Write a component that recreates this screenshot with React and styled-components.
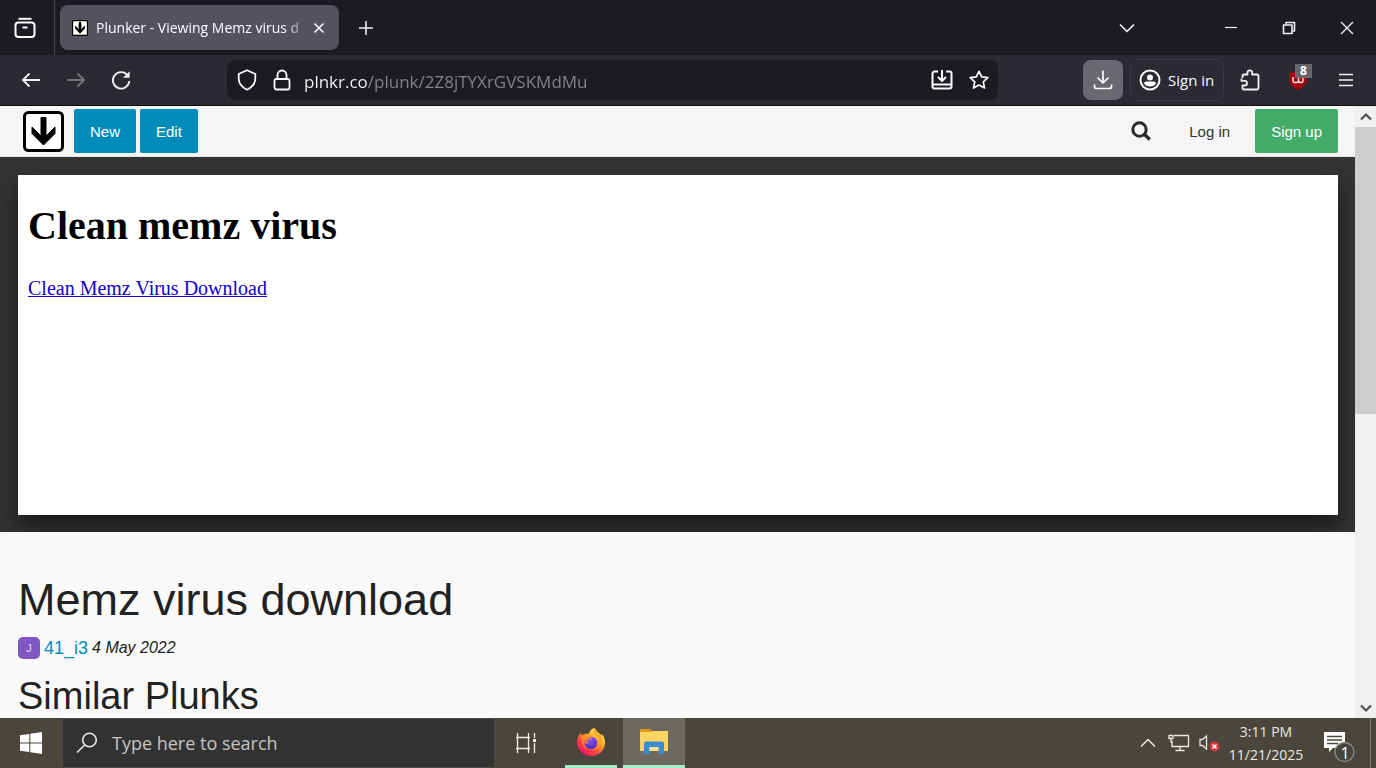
import React from "react";
import styled, { createGlobalStyle, css } from "styled-components";

const ui = `"Open Sans", "Noto Sans", sans-serif`;
const arial = `"Liberation Sans", Arial, sans-serif`;
const times = `"Liberation Serif", "Times New Roman", serif`;

const App = () => {
  return (
    <Screen>
      <GlobalStyle />
      <TabStrip>
        <FirefoxView aria-label="Firefox View">
          <Icon width="22" height="22" viewBox="0 0 22 22" $stroke={2}>
            <path d="M4.5 1.8h13" />
            <rect x="1.5" y="5.5" width="19" height="14.5" rx="3" />
            <path d="M8.5 10.5h5" />
          </Icon>
        </FirefoxView>
        <Tab>
          <PlunkerLogo size={16} thick />
          <TabTitle>Plunker - Viewing Memz virus d</TabTitle>
          <CloseTab aria-label="Close tab">
            <Icon width="12" height="12" viewBox="0 0 12 12" $stroke={1.6}>
              <path d="M1.5 1.5l9 9M10.5 1.5l-9 9" />
            </Icon>
          </CloseTab>
        </Tab>
        <IconButton $width={54} aria-label="New tab">
          <Icon width="16" height="16" viewBox="0 0 16 16" $stroke={1.6}>
            <path d="M8 1v14M1 8h14" />
          </Icon>
        </IconButton>
        <Spacer />
        <ListTabs $width={40} aria-label="List all tabs">
          <Icon width="16" height="16" viewBox="0 0 16 16" $stroke={1.7}>
            <path d="M1 4.5l7 7 7-7" />
          </Icon>
        </ListTabs>
        <IconButton $width={58} aria-label="Minimize">
          <Icon width="14" height="14" viewBox="0 0 14 14" $stroke={1.2}>
            <path d="M1 6.5h12" />
          </Icon>
        </IconButton>
        <IconButton $width={58} aria-label="Restore">
          <Icon width="14" height="14" viewBox="0 0 14 14" $stroke={1.6}>
            <rect x="1.5" y="4" width="8.5" height="8.5" />
            <path d="M4 3.5V1.5h8.5V10H10.5" />
          </Icon>
        </IconButton>
        <IconButton $width={58} aria-label="Close">
          <Icon width="14" height="14" viewBox="0 0 14 14" $stroke={1.4}>
            <path d="M1 1l12 12M13 1L1 13" />
          </Icon>
        </IconButton>
      </TabStrip>

      <Toolbar>
        <IconButton $width={45} aria-label="Back">
          <Icon width="20" height="20" viewBox="0 0 20 20" $stroke={1.8}>
            <path d="M19 10H2M8.5 3.5L2 10l6.5 6.5" />
          </Icon>
        </IconButton>
        <IconButton $width={45} $faded aria-label="Forward">
          <Icon width="20" height="20" viewBox="0 0 20 20" $stroke={1.8}>
            <path d="M1 10h17M11.5 3.5L18 10l-6.5 6.5" />
          </Icon>
        </IconButton>
        <IconButton $width={45} aria-label="Reload">
          <Icon width="20" height="20" viewBox="0 0 20 20" $stroke={1.9}>
            <path d="M16.5 5.2A8.2 8.2 0 1 0 18.3 11" />
            <path d="M18.6 1.2v6.6H12z" fill="currentColor" stroke="none" />
          </Icon>
        </IconButton>
        <UrlBar>
          <Icon width="20" height="22" viewBox="0 0 20 22" $stroke={1.8}>
            <path d="M10 1.3L18.3 5v4.5c0 4.7-3.6 9-8.3 11.2C5.3 18.5 1.7 14.2 1.7 9.5V5z" />
          </Icon>
          <Icon width="18" height="22" viewBox="0 0 18 22" $stroke={1.8}>
            <rect x="1.5" y="10" width="15" height="10.5" rx="2" />
            <path d="M4.5 10V6a4.5 4.5 0 0 1 9 0v4" />
          </Icon>
          <UrlInput
            aria-label="Address"
            defaultValue="plnkr.co/plunk/2Z8jTYXrGVSKMdMu"
            spellCheck="false"
          />
          <Icon width="22" height="20" viewBox="0 0 22 20" $stroke={2}>
            <path d="M7 1.5H3.5a2 2 0 0 0-2 2V16.500a2 2 0 0 0 2 2h15a2 2 0 0 0 2-2V3.500a2 2 0 0 0-2-2H15M1.500 14.500h19M11 0v10.500M7 7l4 4 4-4" />
          </Icon>
          <Icon width="20" height="20" viewBox="0 0 20 20" $stroke={1.7}>
            <path d="M10 1.3l2.7 5.6 6.1.8-4.5 4.200 1.200 6.100L10 15.100 4.500 18l1.200-6.100L1.200 7.700l6.100-.8z" />
          </Icon>
        </UrlBar>
        <DownloadButton aria-label="Downloads">
          <Icon width="20" height="20" viewBox="0 0 20 20" $stroke={1.7}>
            <path d="M10 0.500v12M4.500 7.500l5.500 5.500 5.500-5.500M1.500 14.500v2a2 2 0 0 0 2 2h13a2 2 0 0 0 2-2v-2" />
          </Icon>
        </DownloadButton>
        <SignIn>
          <Icon width="22" height="22" viewBox="0 0 22 22" $stroke={2}>
            <circle cx="11" cy="11" r="9.500" />
            <circle cx="11" cy="8.500" r="3" fill="currentColor" stroke="none" />
            <path
              d="M5 14.500c0-1 1-2 2-2h8c1 0 2 1 2 2-1.200 2-3.500 3-6 3s-4.800-1-6-3z"
              fill="currentColor"
              stroke="none"
            />
          </Icon>
          Sign in
        </SignIn>
        <IconButton $width={48} aria-label="Extensions">
          <Icon width="20" height="22" viewBox="0 0 20 22" $stroke={1.8}>
            <path d="M2.500 9V7a1.500 1.500 0 0 1 1.500-1.500h3.500V3.700a2.300 2.300 0 0 1 4.600 0v1.800H17A1.500 1.500 0 0 1 18.500 7v12a1.500 1.500 0 0 1-1.500 1.500H4A1.500 1.500 0 0 1 2.500 19v-2.500h2.200a2.300 2.300 0 0 0 0-4.600H1.500V9.500" />
          </Icon>
        </IconButton>
        <IconButton $width={48} aria-label="uBlock Origin">
          <svg width="18" height="20" viewBox="0 0 18 20">
            <path d="M9 0c3 2 5.500 2.500 9 2.500V9c0 5-4 8.500-9 11-5-2.500-9-6-9-11V2.500C3.500 2.500 6 2 9 0z" fill="#a00612" />
            <path
              d="M4 7v3.500a2 2 0 0 0 2 2h1.500a2 2 0 0 0 2-2V8M9.500 10.500a2 2 0 0 0 2 2h.5a2 2 0 0 0 2-2V8"
              fill="none"
              stroke="#f3dfe0"
              strokeWidth="1.500"
            />
          </svg>
          <Badge>8</Badge>
        </IconButton>
        <IconButton $width={48} aria-label="Open menu">
          <Icon width="16" height="14" viewBox="0 0 16 14" $stroke={1.7}>
            <path d="M1 1.500h14M1 7h14M1 12.500h14" />
          </Icon>
        </IconButton>
      </Toolbar>

      <Viewport>
        <Site>
          <SiteHeader>
            <LogoLink href="#" aria-label="Plunker">
              <PlunkerLogo size={41} />
            </LogoLink>
            <SiteButton $color="#008cba">New</SiteButton>
            <SiteButton $color="#008cba">Edit</SiteButton>
            <Spacer />
            <SearchButton aria-label="Search">
              <svg width="20" height="20" viewBox="0 0 20 20" fill="none" stroke="#2b2b2b" strokeWidth="3">
                <circle cx="8.500" cy="8.500" r="6.700" />
                <path d="M13.300 13.300l5.500 5.200" strokeWidth="3.400" />
              </svg>
            </SearchButton>
            <LoginLink href="#">Log in</LoginLink>
            <SiteButton $color="#43ac6a">Sign up</SiteButton>
          </SiteHeader>
          <Stage>
            <Preview>
              <PreviewTitle>Clean memz virus</PreviewTitle>
              <PreviewLink href="#">Clean Memz Virus Download</PreviewLink>
            </Preview>
          </Stage>
          <Info>
            <PlunkTitle>Memz virus download</PlunkTitle>
            <Byline>
              <Avatar>J</Avatar>
              <Author href="#">41_i3</Author>
              <PlunkDate>4 May 2022</PlunkDate>
            </Byline>
            <Similar>Similar Plunks</Similar>
          </Info>
        </Site>
        <ScrollBar>
          <ScrollArrow aria-label="Scroll up">
            <Icon width="12" height="8" viewBox="0 0 12 8" $stroke={2.2}>
              <path d="M1 6.500l5-5 5 5" />
            </Icon>
          </ScrollArrow>
          <ScrollTrack>
            <ScrollThumb />
          </ScrollTrack>
          <ScrollArrow aria-label="Scroll down">
            <Icon width="12" height="8" viewBox="0 0 12 8" $stroke={2.2}>
              <path d="M1 1.500l5 5 5-5" />
            </Icon>
          </ScrollArrow>
        </ScrollBar>
      </Viewport>

      <Taskbar>
        <TaskButton $width={62} aria-label="Start">
          <svg width="22" height="22" viewBox="0 0 22 22" fill="#fff">
            <path d="M0 3.200l9.300-1.300v8.600H0zM10.300 1.700L22 0v10.500H10.300zM0 11.500h9.300v8.600L0 18.800zM10.300 11.500H22V22l-11.700-1.700z" />
          </svg>
        </TaskButton>
        <TaskSearch>
          <Icon width="22" height="22" viewBox="0 0 22 22" $stroke={1.6}>
            <circle cx="13.500" cy="8" r="6.800" />
            <path d="M8.700 13L1 20.500" />
          </Icon>
          <SearchInput type="text" placeholder="Type here to search" aria-label="Type here to search" />
        </TaskSearch>
        <TaskButton $width={62} aria-label="Task view">
          <svg width="22" height="20" viewBox="0 0 22 20" fill="none" stroke="#efeee8" strokeWidth="1.300">
            <path d="M2.500 0v20M13.500 0v20M1 4.500h14M1 15.500h14M19.500 0v5M19.500 10v10" />
            <path d="M18 6h3v3h-3z" fill="#efeee8" stroke="none" />
          </svg>
        </TaskButton>
        <TaskButtons>
          <TaskButton $width={52} $running aria-label="Firefox">
            <FirefoxIcon />
          </TaskButton>
          <TaskButton $width={62} $running $active aria-label="File Explorer">
            <svg width="28" height="26" viewBox="0 0 28 26">
              <path d="M0 1.500A1.500 1.500 0 0 1 1.500 0H10l3 3H0z" fill="#e19a12" />
              <path d="M0 3h11l2-1h15v20H0z" fill="#fbd461" />
              <path d="M4 14.500a2 2 0 0 1 2-2h16a2 2 0 0 1 2 2V25h-5.500v-7h-9v7H4z" fill="#3d8cd0" />
              <path d="M9.500 18h9v4h-9z" fill="#fce08a" />
            </svg>
          </TaskButton>
        </TaskButtons>
        <Spacer />
        <TrayButton $width={32} aria-label="Show hidden icons">
          <Icon width="16" height="10" viewBox="0 0 16 10" $stroke={1.5}>
            <path d="M1 8.500l7-7 7 7" />
          </Icon>
        </TrayButton>
        <TrayButton $width={30} aria-label="Network">
          <Icon width="22" height="18" viewBox="0 0 22 18" $stroke={1.3}>
            <path d="M6 1.500h14.500v11H4V8M12 12.500v4M7.500 16.500h9M1 1.500h4v3H1zM3 4.500V8h2" />
          </Icon>
        </TrayButton>
        <TrayButton $width={30} aria-label="Volume muted">
          <svg width="22" height="18" viewBox="0 0 22 18" fill="none" stroke="#e8e6de" strokeWidth="1.300">
            <path d="M2 5.500h2.500L8.500 2v13l-4-3.500H2z" />
            <circle cx="16.500" cy="12.500" r="5" fill="#d9343f" stroke="none" />
            <path d="M14.500 10.500l4 4M18.500 10.500l-4 4" stroke="#fff" strokeWidth="1.500" />
          </svg>
        </TrayButton>
        <Clock>
          <span>3:11 PM</span>
          <span>11/21/2025</span>
        </Clock>
        <Notifications $width={62} aria-label="Notifications">
          <svg width="34" height="34" viewBox="0 0 34 34">
            <path d="M2 3h21v16h-12l-4 4v-4H2z" fill="#fff" />
            <path d="M5 7.500h15M5 11h15M5 14.500h11" stroke="#4a473d" strokeWidth="1.400" />
            <circle cx="22.500" cy="23" r="9.500" fill="#45443e" stroke="#8a8983" strokeWidth="1.400" />
          </svg>
          <Count>1</Count>
        </Notifications>
        <ShowDesktop aria-label="Show desktop" />
      </Taskbar>
    </Screen>
  );
};

const PlunkerLogo = ({ size, thick }) => (
  <svg width={size} height={size} viewBox="0 0 41 41">
    <rect x="1.500" y="1.500" width="38" height="38" rx={thick ? 1 : 4} fill="#fff" stroke="#000" strokeWidth="3" />
    <path
      d="M18 6.500h5v18.500l9-9v6.500L20.500 34 9 22.500V16l9 9z"
      fill="#000"
      stroke="#000"
      strokeWidth={thick ? 2 : 1}
    />
  </svg>
);

const FirefoxIcon = () => (
  <svg width="30" height="30" viewBox="0 0 30 30">
    <defs>
      <linearGradient id="fire" x1="0.850" y1="0.100" x2="0.200" y2="0.950">
        <stop offset="0" stopColor="#fff04a" />
        <stop offset="0.350" stopColor="#ffa72c" />
        <stop offset="0.650" stopColor="#ff4a3a" />
        <stop offset="1" stopColor="#e8106a" />
      </linearGradient>
      <radialGradient id="globe" cx="0.500" cy="0.300" r="0.700">
        <stop offset="0" stopColor="#8a4bff" />
        <stop offset="1" stopColor="#4a2fb0" />
      </radialGradient>
    </defs>
    <path
      d="M18 1c1.500 1 2.500 2.500 3.200 4 1.800.8 3.300 2 4.300 3.500l.5-1.500c2.200 3 3.500 6.300 3 10C28.300 24 22.500 29 15.500 29S1 23.500 1 15.500C1 11 2.800 8 5 5.500l.6 3.200C7.500 7 10 6.600 12.500 7 14 3.500 15.500 2 18 1z"
      fill="url(#fire)"
    />
    <circle cx="15" cy="16" r="6.200" fill="url(#globe)" />
    <path d="M5.600 8.700C8 7.500 11 8 13.500 10c2 .2 3 .8 3 1.700-1.500 1-3.500 1-4.500 2.300-.6 1 .2 2.500 1.500 3.200-2.500.6-5-.7-5.500-3.200-.8 5 3 8.500 7 8.500 5 0 8-4 7.500-8.500-.5-4-4-6-4.500-9 0-1.800 0-3 0-4 3 2 3.500 5 7.500 7.500 1 8-3 14.500-10 14.500S4.500 18 5.600 8.700z" fill="#ff9a26" opacity="0.650" />
  </svg>
);

const GlobalStyle = createGlobalStyle`
  * {
    box-sizing: border-box;
  }
  body {
    margin: 0;
    overflow: hidden;
  }
  button {
    border: 0;
    padding: 0;
    background: none;
    color: inherit;
    font: inherit;
  }
`;

const Screen = styled.div`
  height: 100vh;
  display: flex;
  flex-direction: column;
  font-family: ${ui};
  color: #fbfbfe;
`;

const Spacer = styled.div`
  flex: 1;
`;

const Icon = styled.svg`
  flex: none;
  fill: none;
  stroke: currentColor;
  stroke-width: ${(p) => p.$stroke};
  stroke-linejoin: round;
`;

const IconButton = styled.button`
  position: relative;
  flex: none;
  display: flex;
  align-items: center;
  justify-content: center;
  width: ${(p) => p.$width}px;
  height: 40px;
  color: ${(p) => (p.$faded ? "#77767d" : "#efeff3")};
`;

const TabStrip = styled.div`
  flex: none;
  display: flex;
  align-items: center;
  height: 55px;
  background: #1c1b22;
`;

const FirefoxView = styled.button`
  flex: none;
  display: flex;
  align-items: center;
  justify-content: center;
  width: 55px;
  height: 55px;
  padding-right: 4px;
  border-right: 1px solid #47464e;
`;

const Tab = styled.div`
  flex: none;
  display: flex;
  align-items: center;
  width: 279px;
  height: 45px;
  margin-left: 5px;
  padding: 0 10px 0 12px;
  border-radius: 8px;
  background: #54525e;
`;

const TabTitle = styled.span`
  flex: 1;
  margin-left: 8px;
  white-space: nowrap;
  font-size: 14px;
  line-height: 24px;
  mask-image: linear-gradient(to left, transparent, #000 24px);
`;

const CloseTab = styled.button`
  display: flex;
  align-items: center;
  justify-content: center;
  width: 20px;
  height: 20px;
`;

const ListTabs = styled(IconButton)`
  margin-right: 55px;
`;

const Toolbar = styled.div`
  flex: none;
  display: flex;
  align-items: center;
  height: 51px;
  padding: 0 6px 0 8px;
  background: #2b2a33;
  border-bottom: 1px solid #0c0c0d;
`;

const UrlBar = styled.div`
  flex: 1;
  display: flex;
  align-items: center;
  gap: 16px;
  height: 40px;
  margin: 0 85px 0 84px;
  padding: 0 9px 0 10px;
  border-radius: 8px;
  background: #1c1b22;
`;

/* the host is bright, the path after it is dimmed */
const UrlInput = styled.input`
  flex: 1;
  min-width: 0;
  height: 32px;
  margin-left: -3px;
  padding: 2px 0 0;
  border: 0;
  outline: 0;
  color: #fbfbfe;
  font-family: ${ui};
  font-size: 17px;
  background: linear-gradient(to right, #fbfbfe 63px, #85848b 63px);
  background-clip: text;
  -webkit-text-fill-color: transparent;
`;

const DownloadButton = styled.button`
  flex: none;
  display: flex;
  align-items: center;
  justify-content: center;
  width: 40px;
  height: 40px;
  margin-right: 7px;
  border-radius: 8px;
  background: #6a6971;
`;

const SignIn = styled.button`
  flex: none;
  display: flex;
  align-items: center;
  gap: 7px;
  height: 42px;
  width: 94px;
  margin-right: 2px;
  padding-left: 8px;
  border: 1px solid #3a3942;
  border-radius: 8px;
  font-size: 15px;
  white-space: nowrap;
`;

const Badge = styled.span`
  position: absolute;
  top: 4px;
  right: 10px;
  width: 17px;
  height: 14px;
  background: #68676b;
  color: #fff;
  font-size: 12px;
  font-weight: 700;
  line-height: 14px;
`;

const Viewport = styled.div`
  flex: 1;
  min-height: 0;
  display: flex;
`;

const Site = styled.main`
  flex: 1;
  min-width: 0;
  overflow: hidden;
  background: #f9f9f9;
  color: #222;
  font-family: ${arial};
`;

const SiteHeader = styled.header`
  display: flex;
  align-items: center;
  gap: 4px;
  height: 51px;
  padding: 0 17px 0 23px;
  background: #f5f5f5;
  border-bottom: 1px solid #e4e4e4;
`;

const LogoLink = styled.a`
  display: flex;
  margin-right: 6px;
`;

const SiteButton = styled.button`
  height: 44px;
  padding: 0 16px;
  border-radius: 2px;
  background: ${(p) => p.$color};
  color: #fff;
  font-size: 15px;
`;

const SearchButton = styled.button`
  display: flex;
  padding: 0 18px;
`;

const LoginLink = styled.a`
  padding: 0 21px 0 16px;
  color: #333;
  font-size: 15px;
  text-decoration: none;
`;

const Stage = styled.section`
  padding: 18px 17px 17px 18px;
  overflow: hidden;
  background: #333;
`;

const Preview = styled.div`
  height: 340px;
  padding: 28px 10px;
  background: #fff;
  color: #000;
  box-shadow: 0 12px 20px #1a1a1a;
  font-family: ${times};
`;

const PreviewTitle = styled.h1`
  margin: 0 0 26px;
  font-size: 40px;
  line-height: 46px;
`;

const PreviewLink = styled.a`
  display: block;
  color: #1400c8;
  font-size: 20px;
  line-height: 26px;
  text-decoration-thickness: 1px;
`;

const Info = styled.section`
  padding: 40px 18px 0;
`;

const PlunkTitle = styled.h2`
  margin: 0 0 8px;
  font-size: 45px;
  font-weight: 400;
  line-height: 56px;
`;

const Byline = styled.div`
  display: flex;
  align-items: center;
  gap: 4px;
  height: 24px;
  margin-bottom: 12px;
`;

const Avatar = styled.span`
  width: 22px;
  height: 22px;
  border-radius: 5px;
  background: #7e57c2;
  color: #e8ddf8;
  font-size: 11px;
  line-height: 22px;
  text-align: center;
`;

const Author = styled.a`
  color: #008cba;
  font-size: 18px;
  text-decoration: none;
`;

const PlunkDate = styled.em`
  font-size: 16px;
`;

const Similar = styled.h3`
  margin: 0;
  font-size: 38px;
  font-weight: 400;
  line-height: 48px;
`;

const ScrollBar = styled.div`
  flex: none;
  display: flex;
  flex-direction: column;
  width: 21px;
  background: #f0f0f0;
`;

const ScrollArrow = styled.button`
  display: flex;
  align-items: center;
  justify-content: center;
  height: 21px;
  color: #505050;
`;

const ScrollTrack = styled.div`
  flex: 1;
`;

const ScrollThumb = styled.div`
  height: 287px;
  background: #cdcdcd;
`;

const Taskbar = styled.footer`
  flex: none;
  display: flex;
  height: 50px;
  background: #4a463b;
  color: #eceae3;
`;

const TaskButton = styled.button`
  flex: none;
  display: flex;
  align-items: center;
  justify-content: center;
  width: ${(p) => p.$width}px;
  ${(p) =>
    p.$running &&
    css`
      border-bottom: 3px solid #a6ecc5;
    `}
  ${(p) =>
    p.$active &&
    css`
      background: #6d6961;
    `}
`;

const TaskButtons = styled.div`
  display: flex;
  gap: 6px;
  margin-left: 8px;
`;

const TaskSearch = styled.label`
  display: flex;
  align-items: center;
  gap: 14px;
  width: 433px;
  padding-left: 13px;
  border: 1px solid #4b4a45;
  background: #323232;
`;

const SearchInput = styled.input`
  flex: 1;
  min-width: 0;
  padding: 0;
  border: 0;
  outline: 0;
  background: none;
  color: #fff;
  font-family: ${ui};
  font-size: 18px;
  &::placeholder {
    color: #c4c4c4;
    opacity: 1;
  }
`;

const TrayButton = styled.button`
  position: relative;
  display: flex;
  align-items: center;
  justify-content: center;
  width: ${(p) => p.$width}px;
`;

const Notifications = styled(TrayButton)`
  padding-top: 6px;
`;

const Clock = styled.div`
  display: flex;
  flex-direction: column;
  align-items: center;
  justify-content: center;
  width: 84px;
  font-size: 14px;
  line-height: 23px;
`;

const Count = styled.span`
  position: absolute;
  right: 16px;
  bottom: 4px;
  width: 18px;
  color: #fff;
  font-size: 16px;
  line-height: 22px;
`;

const ShowDesktop = styled.button`
  width: 6px;
  border-left: 1px solid #7c7970;
`;

export default App;
